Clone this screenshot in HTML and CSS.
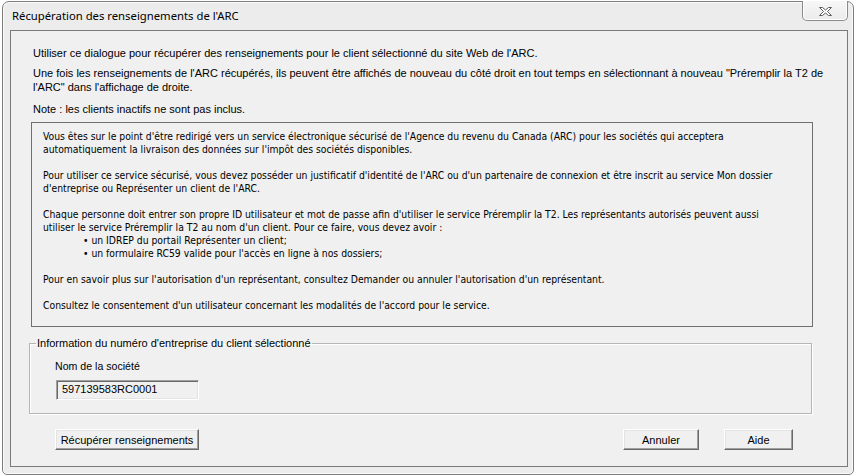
FILE: index.html
```html
<!DOCTYPE html>
<html lang="fr">
<head>
<meta charset="utf-8">
<title>Récupération des renseignements de l'ARC</title>
<link rel="stylesheet" href="styles.css">
</head>
<body>
<div class="window">
  <div class="titlebar">
    <span class="title">Récupération des renseignements de l'ARC</span>
    <div class="close">
      <svg width="13" height="9" viewBox="0 0 13 9"><path d="M0.5,0.5 H3.5 L6.5,3 L9.5,0.5 H12.5 L8.5,4.5 L12.5,8.5 H9.5 L6.5,6 L3.5,8.5 H0.5 L4.5,4.5 Z" fill="#fff" stroke="#5a5a5a" stroke-width="1" stroke-linejoin="round"/></svg>
    </div>
  </div>
  <div class="client">
    <p class="intro p1">Utiliser ce dialogue pour récupérer des renseignements pour le client sélectionné du site Web de l'ARC.</p>
    <p class="intro p2">Une fois les renseignements de l'ARC récupérés, ils peuvent être affichés de nouveau du côté droit en tout temps en sélectionnant à nouveau "Préremplir la T2 de<br>l'ARC" dans l'affichage de droite.</p>
    <p class="intro p3">Note : les clients inactifs ne sont pas inclus.</p>
    <div class="infobox">
      <p>Vous êtes sur le point d'être redirigé vers un service électronique sécurisé de l'Agence du revenu du Canada (ARC) pour les sociétés qui acceptera<br>automatiquement la livraison des données sur l'impôt des sociétés disponibles.</p>
      <p>Pour utiliser ce service sécurisé, vous devez posséder un justificatif d'identité de l'ARC ou d'un partenaire de connexion et être inscrit au service Mon dossier<br>d'entreprise ou Représenter un client de l'ARC.</p>
      <p>Chaque personne doit entrer son propre ID utilisateur et mot de passe afin d'utiliser le service Préremplir la T2. Les représentants autorisés peuvent aussi<br>utiliser le service Préremplir la T2 au nom d'un client. Pour ce faire, vous devez avoir :</p>
      <ul>
        <li>• un IDREP du portail Représenter un client;</li>
        <li>• un formulaire RC59 valide pour l'accès en ligne à nos dossiers;</li>
      </ul>
      <p>Pour en savoir plus sur l'autorisation d'un représentant, consultez Demander ou annuler l'autorisation d'un représentant.</p>
      <p>Consultez le consentement d'un utilisateur concernant les modalités de l'accord pour le service.</p>
    </div>
    <fieldset class="group">
      <legend>Information du numéro d'entreprise du client sélectionné</legend>
      <div class="group-body">
        <div class="label">Nom de la société</div>
        <div class="field">597139583RC0001</div>
      </div>
    </fieldset>
    <div class="buttons">
      <button class="btn btn-fetch">Récupérer renseignements</button>
      <div class="spacer"></div>
      <button class="btn btn-cancel">Annuler</button>
      <button class="btn btn-help">Aide</button>
    </div>
  </div>
</div>
</body>
</html>
```
FILE: styles.css
```css
* { box-sizing: border-box; }
html, body { margin: 0; padding: 0; background: #ffffff; }
body {
  font-family: "Liberation Sans", Arial, sans-serif;
  font-size: 11px;
  color: #000;
}
.window {
  margin: 1px 0 0 2px;
  width: 852px;
  height: 474px;
  border: 1px solid #7d7d7d;
  border-radius: 7px 7px 5px 5px;
  background: #ececec;
  box-shadow: inset 0 0 0 1px #fbfbfb;
  display: flex;
  flex-direction: column;
}
.titlebar {
  height: 28px;
  display: flex;
  align-items: flex-start;
  justify-content: space-between;
  flex: none;
}
.title {
  font-family: "Noto Sans", "Open Sans", sans-serif;
  font-size: 11.3px;
  line-height: 28px;
  margin-left: 9px;
  color: #000;
}
.close {
  margin-top: -1px;
  margin-right: 5px;
  width: 46px;
  height: 20px;
  border: 1px solid #8a8a8a;
  border-top: none;
  border-radius: 0 0 5px 5px;
  background: linear-gradient(#f7f7f7, #ebebeb);
  box-shadow: inset 0 -1px 0 #fff, inset 1px 0 0 #fff, inset -1px 0 0 #fff;
  display: flex;
  align-items: center;
  justify-content: center;
}
.close svg { display: block; margin-top: 1px; }
.client {
  flex: 1;
  margin: 0 5px 7px 7px;
  border: 1px solid #7a7a7a;
  background: #f0f0f0;
  padding-top: 15px;
  display: flex;
  flex-direction: column;
}
.intro {
  margin: 0;
  padding-left: 22px;
  line-height: 14px;
  white-space: nowrap;
}
.p2 { margin-top: 6px; }
.p3 { margin-top: 8px; }
.infobox {
  margin: 6px 0 0 20px;
  width: 782px;
  height: 205px;
  border: 1px solid #6f6f6f;
  padding: 7px 0 0 11px;
  line-height: 13px;
  white-space: nowrap;
  flex: none;
  font-family: "DejaVu Sans Condensed", "DejaVu Sans", sans-serif;
  font-stretch: condensed;
  font-size: 10.3px;
}
.infobox p { margin: 0 0 13px 0; }
.infobox p:nth-of-type(3) { margin-bottom: 0; }
.infobox ul { margin: 0 0 13px 0; padding: 0 0 0 40px; list-style: none; }
.group {
  margin: 10px 0 0 18px;
  width: 783px;
  padding: 0 0 13px 6px;
  border: 1px solid #b5b5b5;
  box-shadow: 1px 1px 0 #fff, inset 1px 1px 0 #fff;
  flex: none;
  min-width: 0;
}
.group legend {
  padding: 0 1px;
  line-height: 13px;
}
.group-body { padding-left: 19px; }
.label { margin-top: 10px; line-height: 13px; font-size: 10.6px; }
.field {
  margin-top: 7px;
  width: 143px;
  height: 20px;
  margin-left: 1px;
  border: 1px solid;
  border-color: #a0a0a0 #ffffff #ffffff #a0a0a0;
  box-shadow: inset 1px 1px 0 #696969, inset -1px -1px 0 #e3e3e3;
  padding: 0 0 0 5px;
  line-height: 17px;
  background: #f0f0f0;
}
.buttons {
  margin: 15px 54px 0 44px;
  display: flex;
  flex: none;
}
.spacer { flex: 1; }
.btn {
  font-family: "Liberation Sans", Arial, sans-serif;
  font-size: 11px;
  color: #000;
  height: 21px;
  padding: 0;
  border: 1px solid;
  border-color: #ffffff #696969 #696969 #ffffff;
  box-shadow: inset -1px -1px 0 #a0a0a0, inset 1px 1px 0 #e3e3e3;
  background: #f0f0f0;
  border-radius: 0;
}
.btn-fetch { width: 144px; }
.btn-cancel { width: 76px; }
.btn-help { width: 69px; margin-left: 25px; }
```
